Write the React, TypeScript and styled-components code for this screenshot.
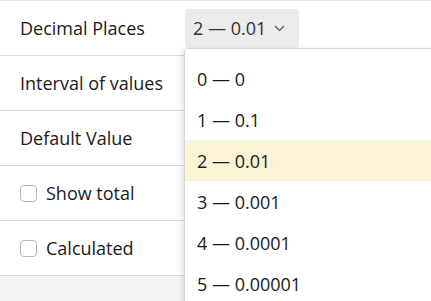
import * as React from 'react';
import styled, { createGlobalStyle } from 'styled-components';

const GlobalStyle = createGlobalStyle`
    html, body {
        margin: 0;
        padding: 0;
        background: #f5f5f5;
        font-family: "Open Sans", "Noto Sans", sans-serif;
        color: #1a1a1a;
        overflow: hidden;
    }
`

const Page = styled.div`
    position: relative;
    width: 431px;
    height: 301px;
    overflow: hidden;
    background: #f5f5f5;
`

const Table = styled.div`
    display: flex;
    flex-direction: column;
    background: white;
    border-top: 1px solid #e6e6e6;
`

const Row = styled.div`
    display: grid;
    grid-template-columns: 184px 1fr;
    align-items: center;
    height: 54px;
    border-bottom: 1px solid #dcdcdc;
`

const Label = styled.div`
    font-size: 18px;
    padding-left: 20px;
    display: flex;
    align-items: center;
    gap: 9px;
`

const Checkbox = styled.span`
    display: inline-block;
    width: 15px;
    height: 15px;
    border: 1px solid #b8b8b8;
    border-radius: 4px;
    background: white;
`

const SelectButton = styled.div`
    display: inline-flex;
    align-items: center;
    gap: 8px;
    height: 39px;
    padding: 0 14px 0 8px;
    margin-left: 1px;
    border-radius: 4px;
    background: #ebebeb;
    font-size: 18px;
    color: #333;
    justify-self: start;
`

const Menu = styled.div`
    position: absolute;
    left: 184px;
    top: 48px;
    right: -10px;
    bottom: -20px;
    background: white;
    border: 1px solid #d6d6d6;
    border-radius: 4px;
    box-shadow: -2px 2px 6px rgba(0, 0, 0, 0.12);
    padding-top: 9px;
    display: flex;
    flex-direction: column;
`

const Option = styled.div<{ $active?: boolean }>`
    height: 41px;
    display: flex;
    align-items: center;
    padding-left: 12px;
    font-size: 18px;
    color: #1a1a1a;
    background: ${p => p.$active ? '#faf3d6' : 'transparent'};
`

const options = ['0 — 0', '1 — 0.1', '2 — 0.01', '3 — 0.001', '4 — 0.0001', '5 — 0.00001'];

const Chevron = () => (
    <svg width="11" height="7" viewBox="0 0 11 7" fill="none">
        <path d="M1 1l4.5 4.5L10 1" stroke="#555" strokeWidth="1.2" />
    </svg>
)

export default function App() {
    return (
        <Page>
            <GlobalStyle />
            <Table>
                <Row>
                    <Label>Decimal Places</Label>
                    <SelectButton>2 — 0.01 <Chevron /></SelectButton>
                </Row>
                <Row><Label>Interval of values</Label></Row>
                <Row><Label>Default Value</Label></Row>
                <Row><Label><Checkbox />Show total</Label></Row>
                <Row><Label><Checkbox />Calculated</Label></Row>
            </Table>
            <Menu>
                {options.map((o, i) => (
                    <Option key={o} $active={i === 2}>{o}</Option>
                ))}
            </Menu>
        </Page>
    )
}
